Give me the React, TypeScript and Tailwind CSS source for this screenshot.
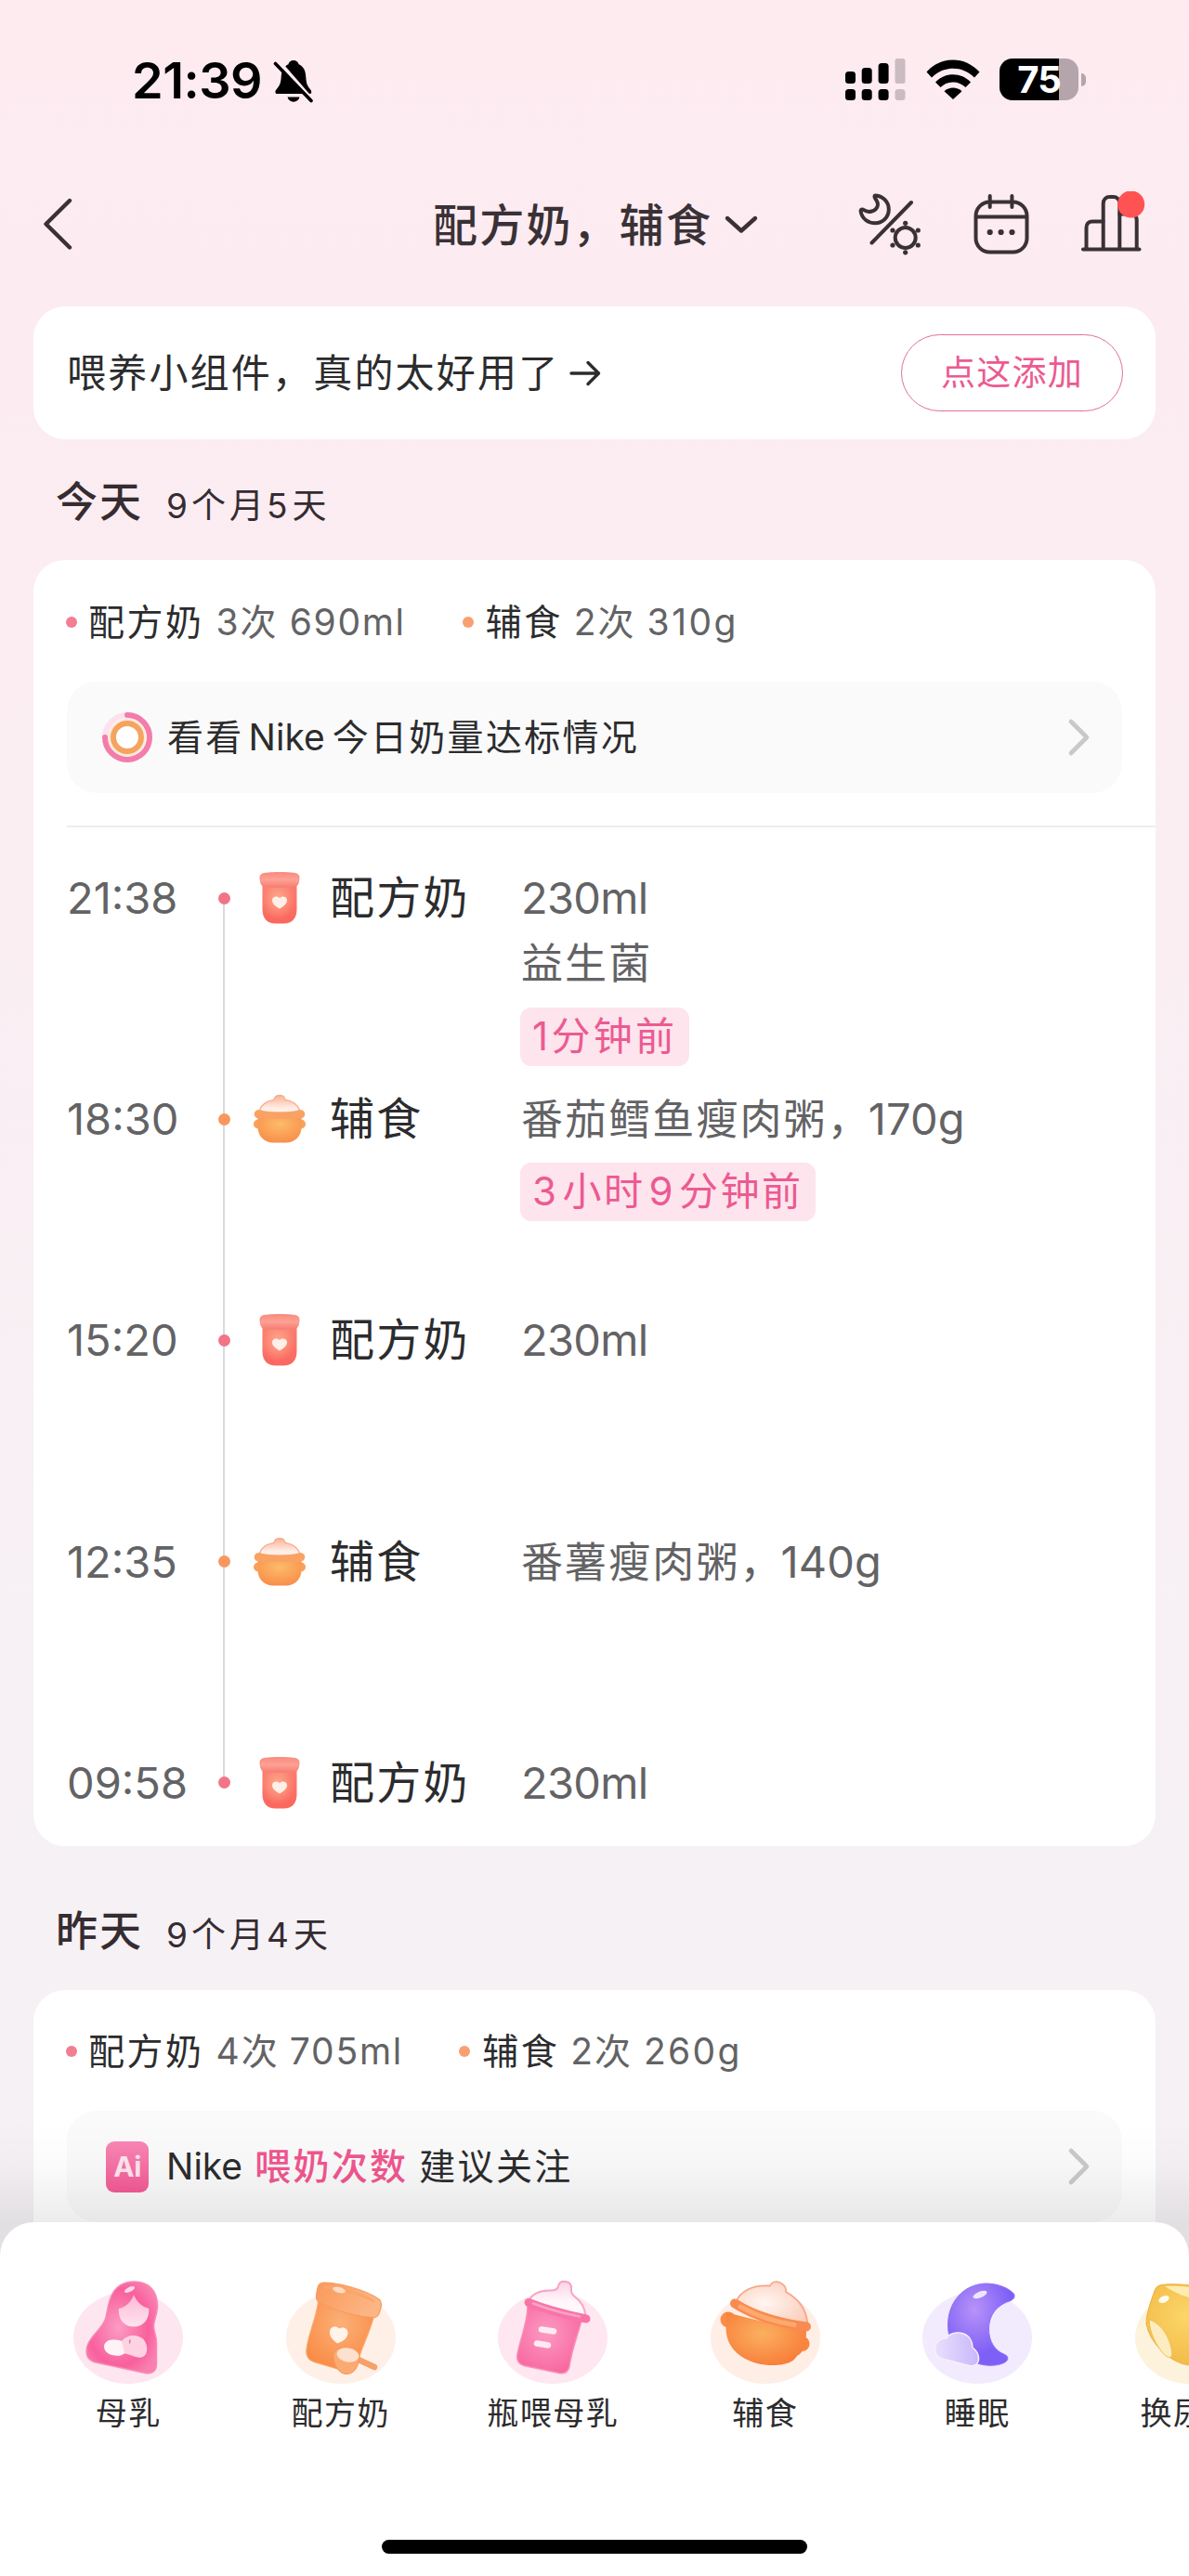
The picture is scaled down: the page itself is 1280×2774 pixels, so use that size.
import React from "react";

const FONT = "font-[Inter,'Noto_Sans_CJK_SC',sans-serif]";

function StatusBar() {
  return (
    <div className="flex h-[174px] items-start pl-[142px] pr-[111px] pt-[54px] text-black">
      <span className="w-[150px] whitespace-nowrap text-[54px] font-semibold leading-[66px] tracking-[-0.500px]">21:39</span>
      <svg className="ml-[2px] mt-[10px] h-[48px] w-[44px]" viewBox="0 0 44 48">
        <path
          fill="#000"
          d="M22 1c3 0 5 1.800 5.600 4.300C33.500 8 35 13 35.300 19c.4 7.500 2 10 4.700 13.200 1.700 2 2 4.800-.8 4.800H4.500c-2.600 0-2.600-2.800-.9-4.800C6.500 29 8.300 26 8.700 19 9 13 11 8 16.400 5.300 17 2.800 19 1 22 1zM15.500 40.500h13c-.8 3.200-3.400 5.200-6.500 5.200s-5.700-2-6.500-5.200z"
        />
        <path d="M5 1l40 46" stroke="#fcecf1" strokeWidth="4" />
        <path d="M2.500 4.500l38.500 40" stroke="#000" strokeWidth="3.600" strokeLinecap="round" />
      </svg>
      <svg className="ml-auto mt-[7px] h-[50px] w-[70px]" viewBox="0 0 70 50">
        <rect x="2" y="16" width="11" height="13" rx="3.500" />
        <rect x="19.700" y="12" width="11" height="17" rx="3.500" />
        <rect x="37.600" y="7" width="11" height="22" rx="3.500" />
        <rect x="55.500" y="2" width="11" height="27" rx="2.500" fill="#cbbcc2" />
        <rect x="2" y="35" width="11" height="12" rx="3.500" />
        <rect x="19.700" y="35" width="11" height="12" rx="3.500" />
        <rect x="37.600" y="35" width="11" height="12" rx="3.500" />
        <rect x="55.500" y="35" width="11" height="12" rx="3.500" fill="#cbbcc2" />
      </svg>
      <svg className="ml-[18px] mt-[9px] h-[46px] w-[60px]" viewBox="0 0 60 46">
        <path d="M1.500 14.500C17-3 43-3 58.500 14.500L53 20.500C40 7.500 20 7.500 7 20.500z" />
        <path d="M11 25.500C21 14.500 39 14.500 49 25.500L43.500 31C36 23.500 24 23.500 16.500 31z" />
        <path d="M20.500 35.300c5.500-5 13.500-5 19 0L30 44z" />
      </svg>
      <div className="ml-[20px] mt-[9px] flex items-center">
        <div className="flex h-[45px] w-[85px] items-center justify-center rounded-[14px] bg-[linear-gradient(90deg,#000_0_64px,#b3a5ab_64px)]">
          <span className="text-[40px] font-bold leading-[45px] tracking-[-1px] text-white">75</span>
        </div>
        <div className="ml-[3px] h-[14px] w-[5px] rounded-r-full bg-[#b3a5ab]" />
      </div>
    </div>
  );
}

function MoonSunIcon() {
  return (
    <svg className="h-[70px] w-[72px]" viewBox="0 0 72 70" fill="none" stroke="#3a3136" strokeWidth="4" strokeLinecap="round" strokeLinejoin="round">
      <path d="M20.500 4.500c8 .5 14.300 7 14.300 15S28.500 34.300 20.300 34.300c-7.800 0-14.300-4.800-15.600-12.300-.4-2.600 1.600-3.200 3.300-1.800 5 3.500 12.800 1.500 14.700-4.300 1-3.300-.4-5.400-2.300-7.900-1.300-1.800-1.200-3.500.1-3.500z" />
      <path d="M59 12L16.500 55.500" />
      <circle cx="52.700" cy="50" r="11" />
      <g fill="#3a3136" stroke="none">
        <circle cx="52.700" cy="34.300" r="2.600" />
        <circle cx="52.700" cy="65.800" r="2.600" />
        <circle cx="39" cy="42" r="2.600" />
        <circle cx="66.300" cy="42" r="2.600" />
        <circle cx="39" cy="58" r="2.600" />
        <circle cx="66.300" cy="58" r="2.600" />
      </g>
    </svg>
  );
}

function CalendarIcon() {
  return (
    <svg className="h-[70px] w-[66px]" viewBox="0 0 66 70" fill="none" stroke="#3a3136" strokeWidth="4" strokeLinecap="round">
      <rect x="5.500" y="11.500" width="55" height="54" rx="15" />
      <path d="M6 27.500h54M20.700 5v12M44.400 5v12" />
      <g fill="#3a3136" stroke="none">
        <circle cx="20.700" cy="44" r="3.100" />
        <circle cx="32.600" cy="44" r="3.100" />
        <circle cx="44.500" cy="44" r="3.100" />
      </g>
    </svg>
  );
}

function ChartIcon() {
  return (
    <svg className="h-[70px] w-[72px]" viewBox="0 0 72 70" fill="none" stroke="#3a3136" strokeWidth="4" strokeLinecap="round">
      <path d="M4 62.500h60.500" />
      <path d="M7.500 62V39c0-4 2.500-6.500 6.500-6.500h11.500" />
      <path d="M25.700 62V13.500c0-5 3-7.500 7-7.500h3.600c4 0 7 2.500 7 7.500V62" />
      <path d="M43.300 24.500h11.400c4 0 7 2.500 7 6.500v31" />
      <circle cx="55.600" cy="14" r="14.600" fill="#ff5353" stroke="none" />
    </svg>
  );
}

function NavBar() {
  return (
    <div className="grid h-[156px] grid-cols-[466px_1fr_366px] items-start">
      <svg className="ml-[43px] mt-[37px] h-[60px] w-[38px]" viewBox="0 0 38 60" fill="none" stroke="#3a3136" strokeWidth="4.400" strokeLinecap="round" strokeLinejoin="round">
        <path d="M32 5L6.500 30.200 32 55.500" />
      </svg>
      <div className="flex items-center pt-[34px]">
        <span className="whitespace-nowrap text-[48px] font-medium leading-[70px] tracking-[2.200px] text-[#3a3136]">配方奶，辅食</span>
        <svg className="ml-[12px] mt-[-3px] h-[24px] w-[38px] shrink-0" viewBox="0 0 38 24" fill="none" stroke="#3a3136" strokeWidth="4.400" strokeLinecap="round" strokeLinejoin="round">
          <path d="M4 5l15 13.500L34 5" />
        </svg>
      </div>
      <div className="flex pl-[8px] pt-[32px]">
        <MoonSunIcon />
        <div className="ml-[51px]"><CalendarIcon /></div>
        <div className="ml-[51px]"><ChartIcon /></div>
      </div>
    </div>
  );
}

function Banner() {
  return (
    <div className="mx-[36px] flex h-[143px] items-center justify-between rounded-[34px] bg-white pl-[36px] pr-[35px]">
      <div className="flex items-center">
        <span className="whitespace-nowrap text-[42px] leading-[60px] tracking-[2.200px] text-[#2c2c2e]">喂养小组件，真的太好用了</span>
        <svg className="ml-[10px] h-[32px] w-[36px]" viewBox="0 0 36 32" fill="none" stroke="#2c2c2e" strokeWidth="3.400" strokeLinecap="round" strokeLinejoin="round">
          <path d="M3 16h29M21 4.500L32.500 16 21 27.500" />
        </svg>
      </div>
      <div className="flex h-[83px] w-[239px] items-center justify-center rounded-full border-[1.500px] border-[#e0709c] text-[37px] leading-[60px] tracking-[1.300px] text-[#ec5a91]">
        点这添加
      </div>
    </div>
  );
}

function DayHeading({ day, age }: { day: string; age: React.ReactNode }) {
  return (
    <div className="flex items-center pl-[60px] text-[#352c31]">
      <span className="text-[45px] font-medium leading-[64px] tracking-[2px]">{day}</span>
      <span className="ml-[25px] mt-[9px] whitespace-nowrap text-[37px] leading-[56px]">{age}</span>
    </div>
  );
}

function Summary({ milk, food, gap }: { milk: React.ReactNode; food: React.ReactNode; gap: string }) {
  return (
    <div className="flex h-[60px] items-center pl-[35px] text-[39px] leading-[60px] text-[#636365]">
      <span className="h-[12px] w-[12px] rounded-full bg-[#f27e92]" />
      <span className="ml-[12px] whitespace-nowrap tracking-[2.500px] text-[#2c2c2e]">配方奶</span>
      <span className="ml-[13px] whitespace-nowrap">{milk}</span>
      <span className={"h-[12px] w-[12px] rounded-full bg-[#f8a071] " + gap} />
      <span className="ml-[13px] whitespace-nowrap tracking-[2.500px] text-[#2c2c2e]">辅食</span>
      <span className="ml-[12px] whitespace-nowrap">{food}</span>
    </div>
  );
}

function ChevronRight() {
  return (
    <svg className="ml-auto h-[44px] w-[26px]" viewBox="0 0 26 44" fill="none" stroke="#c9c9c9" strokeWidth="4.600" strokeLinecap="round" strokeLinejoin="round">
      <path d="M4 5l17 17L4 39" />
    </svg>
  );
}

function RingIcon() {
  return (
    <svg className="h-[56px] w-[56px]" viewBox="0 0 56 56" fill="none">
      <circle cx="28" cy="28" r="24" stroke="#fde2ee" strokeWidth="6" />
      <path d="M28 4a24 24 0 1 1-24 24" stroke="#f47caa" strokeWidth="6" strokeLinecap="round" />
      <circle cx="28" cy="28" r="19" stroke="#fdebdc" strokeWidth="3" />
      <circle cx="28" cy="28" r="15" stroke="#f5a35f" strokeWidth="6" fill="#fff" />
    </svg>
  );
}

function AiIcon() {
  return (
    <div className="flex h-[55px] w-[46px] items-center justify-center rounded-[9px] bg-[linear-gradient(#f886b4,#f35a94)] text-[30px] font-bold leading-[55px] tracking-[-0.500px] text-[#ffe3ef]">
      Ai
    </div>
  );
}

function JarIcon() {
  return (
    <svg className="h-[56px] w-[44px]" viewBox="0 0 44 56">
      <defs>
        <linearGradient id="jarBody" x1="0" y1="0" x2="0" y2="1">
          <stop offset="0" stopColor="#fb7d70" />
          <stop offset="1" stopColor="#fa675e" />
        </linearGradient>
        <radialGradient id="jarGlow" cx=".45" cy=".4" r=".5">
          <stop offset="0" stopColor="#ffb08f" stopOpacity=".9" />
          <stop offset="1" stopColor="#ffb08f" stopOpacity="0" />
        </radialGradient>
        <linearGradient id="jarLid" x1="0" y1="0" x2="0" y2="1">
          <stop offset="0" stopColor="#fb8a7d" />
          <stop offset=".5" stopColor="#fca295" />
          <stop offset="1" stopColor="#f97a70" />
        </linearGradient>
      </defs>
      <path d="M3.500 12h37v28c0 10-5 15.500-14 15.500h-9c-9 0-14-5.500-14-15.500z" fill="url(#jarBody)" />
      <path d="M3.500 12h37v28c0 10-5 15.500-14 15.500h-9c-9 0-14-5.500-14-15.500z" fill="url(#jarGlow)" />
      <path d="M7 1.200c9-1 21-1 30 0 4.500.5 6 2 6 4.800s-.8 7-2 8.300c-1 1.200-3 1.500-6 1.800-8 .7-18 .7-26 0-3-.3-5-.6-6-1.800C1.800 13 1 8.800 1 6s1.500-4.300 6-4.800z" fill="url(#jarLid)" stroke="#f4837a" strokeWidth=".8" />
      <path d="M22 39.500c-5-3-8-5.500-8-9 0-4 5-5.500 8-2.500 3-3 8-1.500 8 2.500 0 3.500-3 6-8 9z" fill="#ffefe9" />
    </svg>
  );
}

function PotIcon() {
  return (
    <svg className="h-[52px] w-[56px]" viewBox="0 0 56 52">
      <defs>
        <radialGradient id="potBody" cx=".5" cy=".3" r=".7">
          <stop offset="0" stopColor="#fdbb6a" />
          <stop offset="1" stopColor="#f88f4a" />
        </radialGradient>
        <linearGradient id="potDome" x1="0" y1="0" x2="0" y2="1">
          <stop offset="0" stopColor="#fab193" />
          <stop offset=".75" stopColor="#ffeee7" />
        </linearGradient>
      </defs>
      <circle cx="5" cy="31.500" r="5" fill="#f9a15a" />
      <circle cx="51" cy="31.500" r="5" fill="#f9a15a" />
      <path d="M6 19C7 12 13 6.500 22 5.300 22.500 2 25 .5 28 .5s5.500 1.500 6 4.800C43 6.500 49 12 50 19z" fill="url(#potDome)" stroke="#f7a98a" strokeWidth="1.200" />
      <path d="M4.500 23h47v12c0 9-7 16.500-17 16.500h-13C11.500 51.500 4.500 44 4.500 35z" fill="url(#potBody)" />
      <path d="M6 16c12 3.500 32 3.500 44 0 4 0 6 3 5 6.500C54 25 52 25.500 49 25.300c-14 1-28 1-42 0-3 .2-5-.3-6-2.800C0 19 2 16 6 16z" fill="#f9a263" />
    </svg>
  );
}

function Disc({ fill }: { fill: string }) {
  return <ellipse cx="65" cy="65.500" rx="59" ry="49.500" fill={fill} />;
}

function MotherIcon() {
  return (
    <svg className="h-[120px] w-[130px]" viewBox="0 0 130 120">
      <defs>
        <radialGradient id="mom" cx=".45" cy=".5" r=".6">
          <stop offset="0" stopColor="#fb9cc3" />
          <stop offset=".7" stopColor="#f8609d" />
          <stop offset="1" stopColor="#f97fb0" />
        </radialGradient>
        <linearGradient id="momFace" x1="0" y1="0" x2="0" y2="1">
          <stop offset="0" stopColor="#fdb9d4" />
          <stop offset="1" stopColor="#fee3ee" />
        </linearGradient>
      </defs>
      <Disc fill="#fee6f0" />
      <path d="M71 5c15-.5 25 9 25.500 25 .3 9-4 17-4 23 0 6 3 9 3 18v23c0 7-5 11-12 9.500L30 92c-8-2-11-8-9.500-16 2-12 17-20 20-31 2.500-8 2-16 7-26C52 10 60 5.200 71 5z" fill="url(#mom)" stroke="#f88bb6" strokeWidth="1.500" />
      <path d="M71 19c3 8 9 13 16.300 15C88 46 81 53.500 71 53.500S54 46 54.800 34C61 33 68 28 71 19z" fill="url(#momFace)" />
      <ellipse cx="66.500" cy="13.500" rx="6" ry="2.600" transform="rotate(-25 66.500 13.500)" fill="#fff" opacity=".75" />
      <path d="M58 69c5-6 12-7 18-5 7 2 10 9 9 16-1 6-6 8-12 6-5-1.500-8-3.500-14-3.500z" fill="#fdd3e3" />
      <path d="M39 75c0-4.500 5-8 10-7.500 4-.4 7 .5 9 1.500l3 13c-3 3-7 3.500-10 2.500-6 0-12-4-12-9.500z" fill="#fff3f8" />
      <path d="M67 67.500l-.5 4" stroke="#c96a93" strokeWidth="1.200" />
    </svg>
  );
}

function FormulaIcon() {
  return (
    <svg className="h-[120px] w-[130px]" viewBox="0 0 130 120">
      <defs>
        <radialGradient id="fmBody" cx=".5" cy=".35" r=".65">
          <stop offset="0" stopColor="#fcb077" />
          <stop offset="1" stopColor="#f98b46" />
        </radialGradient>
        <linearGradient id="fmLid" x1="0" y1="0" x2="1" y2=".4">
          <stop offset="0" stopColor="#fa995a" />
          <stop offset="1" stopColor="#fcb684" />
        </linearGradient>
      </defs>
      <Disc fill="#fef0e7" />
      <path d="M41 22C40 42 30 60 28 78c-.8 7 2 11.500 8 13.500l32 9.500c8 2 12.500-.5 14.500-8C87 76 97 58 101 40z" fill="url(#fmBody)" stroke="#fba669" strokeWidth="1.200" />
      <path d="M46 6c18 0 44 8 57 16 5 2.500 6.500 6 5 11-1.500 6-3 11-7.500 10.500C81 43 59 36 43 28c-4-2-5-4-4.500-8C39.500 12 40 6.500 46 6z" fill="url(#fmLid)" stroke="#f59d62" strokeWidth="1.200" />
      <path d="M47 11c18 1 39 7 53 15" fill="none" stroke="#f9a66d" strokeWidth="3" strokeLinecap="round" />
      <ellipse cx="63" cy="14" rx="7" ry="3" transform="rotate(14 63 14)" fill="#fff" opacity=".6" />
      <path d="M61 71.500c-6-4.500-8.500-8.500-8-13 .6-5 6.500-6.500 10-3 4-2.500 10-.5 9.500 5-.5 5-4 8.500-11.500 11z" fill="#fff3ea" />
      <path d="M85 89.500l16 7.500" stroke="#f6a06a" strokeWidth="6.500" strokeLinecap="round" />
      <path d="M57 84c0-5 6-8 13-8s16 4 15 10c-1 10-5 18.500-14 18.500-8 0-14-9-14-20.500z" fill="#fbaa73" stroke="#f79757" strokeWidth="1" />
      <ellipse cx="72.500" cy="84" rx="12" ry="7.500" transform="rotate(10 72.500 84)" fill="#fee0ce" />
    </svg>
  );
}

function BottleIcon() {
  return (
    <svg className="h-[120px] w-[130px]" viewBox="0 0 130 120">
      <defs>
        <radialGradient id="btBody" cx=".45" cy=".4" r=".7">
          <stop offset="0" stopColor="#fb9ac2" />
          <stop offset="1" stopColor="#f8619c" />
        </radialGradient>
        <linearGradient id="btDome" x1="0" y1="0" x2="0" y2="1">
          <stop offset="0" stopColor="#fdd3e4" />
          <stop offset=".6" stopColor="#fff7fa" />
        </linearGradient>
      </defs>
      <Disc fill="#fee7f0" />
      <path d="M39 27c3-9 13-13 24-12.500 5 0 7.500-2 8-4.500 1-4 4-5.800 8-5 4.500.8 6.500 4 6 8-.6 4 1 6 4 8.500 8 6 11 12 11 20C80 40 60 35 39 27z" fill="url(#btDome)" stroke="#f8a3c6" strokeWidth="2" />
      <path d="M38 31C38 50 30 66 27 83c-1.300 7 1 10.500 7 12.500l38 8c6 1 9.500-1 11-7C85 80 92 62 97 44z" fill="url(#btBody)" stroke="#fa8fba" strokeWidth="1.500" />
      <path d="M39 27.500c20 8 40 13 62 17.500" fill="none" stroke="#f874a8" strokeWidth="9" strokeLinecap="round" />
      <path d="M44 28.500c17 6.500 34 11 50 14" fill="none" stroke="#fba3c7" strokeWidth="2.500" strokeLinecap="round" />
      <path d="M53 56.500l13 2M48 71.500l12 2" stroke="#feeaf2" strokeWidth="6.500" strokeLinecap="round" />
    </svg>
  );
}

function FoodIcon() {
  return (
    <svg className="h-[120px] w-[130px]" viewBox="0 0 130 120">
      <defs>
        <radialGradient id="fdBody" cx=".45" cy=".4" r=".6">
          <stop offset="0" stopColor="#fbb060" />
          <stop offset="1" stopColor="#f8803b" />
        </radialGradient>
        <radialGradient id="fdDome" cx=".4" cy=".5" r=".7">
          <stop offset="0" stopColor="#fff6f1" />
          <stop offset="1" stopColor="#fbcbb9" />
        </radialGradient>
      </defs>
      <Disc fill="#feeee6" />
      <circle cx="25" cy="46" r="8.500" fill="#f88e4a" />
      <circle cx="104.500" cy="72" r="8" fill="#f88543" />
      <path d="M33 27c5-11 17-19 37-17.500 1.500-4 6-5.500 10.500-3.500s7 6 6.500 10c14 8 22 18 23.500 35C79 48 53 41 33 27z" fill="url(#fdDome)" stroke="#f7a68a" strokeWidth="1.800" />
      <path d="M23 38c0 8-1 16 0 23 3 22 27 35 52 34 12-.5 20-3 24-10 8-4 10-14 10-29C79 52 53 46 23 38z" fill="url(#fdBody)" />
      <path d="M32 28.500c22 14 47 21 77 25" fill="none" stroke="#f88a52" strokeWidth="10" strokeLinecap="round" />
      <path d="M38 32c20 11 40 17 58 19.500" fill="none" stroke="#fbaa6c" strokeWidth="5" strokeLinecap="round" />
    </svg>
  );
}

function SleepIcon() {
  return (
    <svg className="h-[120px] w-[130px]" viewBox="0 0 130 120">
      <defs>
        <radialGradient id="slMoon" cx=".4" cy=".32" r=".55">
          <stop offset="0" stopColor="#b793f8" />
          <stop offset="1" stopColor="#7f60f6" />
        </radialGradient>
        <linearGradient id="slCloud" x1="0" y1="0" x2="1" y2="0">
          <stop offset="0" stopColor="#eadffd" />
          <stop offset="1" stopColor="#c9b7fa" />
        </linearGradient>
      </defs>
      <Disc fill="#f2ebfe" />
      <path d="M74 7c10 0 22 3 29.500 10 3 3 1.500 7-2.500 8.500C86 30 77.500 41 77.500 56c0 13 6 23 17 27.500 4 1.500 4.500 5.500 1 8C88 96 76 96.500 65 93 46 87 33.500 72 33.500 52 33.500 27 50 8 74 7z" fill="url(#slMoon)" stroke="#8d74f6" strokeWidth="1" />
      <ellipse cx="68" cy="19" rx="8" ry="3.300" transform="rotate(-22 68 19)" fill="#fff" opacity=".8" />
      <path d="M32 66c2-5 11-7.500 18-5 7 2.500 10 9 10 15 4 3 7 8 6.500 13-.6 6-6 8-12 6L31 89c-7-1-12-5-11.500-12C20 70 26 65.500 32 66z" fill="url(#slCloud)" stroke="#f5effe" strokeWidth="1.500" />
    </svg>
  );
}

function DiaperIcon() {
  return (
    <svg className="h-[120px] w-[130px]" viewBox="0 0 130 120">
      <defs>
        <radialGradient id="dpBody" cx=".45" cy=".4" r=".6">
          <stop offset="0" stopColor="#fbd668" />
          <stop offset="1" stopColor="#f3bb48" />
        </radialGradient>
      </defs>
      <Disc fill="#fdf3dd" />
      <path d="M38 8c20-1 50 2 70 14 5 4 4 20 0 34-6 22-20 39-44 39C44 92 22 72 18 50c0-12 6-26 9-35 2-5 5-7 11-7z" fill="url(#dpBody)" stroke="#eeb441" strokeWidth="1.200" />
      <path d="M38 10c18-1 50 2 68 13-18 4-45 3-68-13z" fill="#fdebb0" />
      <path d="M21 46c11 3 23 16 25 38-2 5-7 2-11-3-7-9-13-20-14-35z" fill="#fcecc0" stroke="#f0bd53" strokeWidth="1" />
      <ellipse cx="37" cy="24" rx="6" ry="3.500" transform="rotate(-25 37 24)" fill="#fff" opacity=".9" />
    </svg>
  );
}

type Entry = { time: string; kind: "milk" | "food"; value: string; extra?: string; ago?: React.ReactNode };

const entries: Entry[] = [
  { time: "21:38", kind: "milk", value: "230ml", extra: "益生菌", ago: <span className="tracking-[3.300px]">1分钟前</span> },
  { time: "18:30", kind: "food", value: "番茄鳕鱼瘦肉粥，170g", ago: <>3<span className="ml-[4px]">小时</span><span className="mx-[4px]">9</span>分钟前</> },
  { time: "15:20", kind: "milk", value: "230ml" },
  { time: "12:35", kind: "food", value: "番薯瘦肉粥，140g" },
  { time: "09:58", kind: "milk", value: "230ml" },
];

function Mixed({ text }: { text: string }) {
  const m = text.match(/^([^\x00-\x7f]*)([\x00-\x7f]*)$/);
  const lead = m ? m[1] : "";
  const rest = m ? m[2] : text;
  return (
    <>
      {lead && <span className="text-[45px] tracking-[2.100px]">{lead}</span>}
      {rest && <span className={lead ? "ml-[-3px] text-[47px] tracking-[0.100px]" : "text-[47px] tracking-[-0.700px]"}>{rest}</span>}
    </>
  );
}

function TimelineRow({ e }: { e: Entry }) {
  return (
    <div className="grid h-[238.200px] grid-cols-[163px_74px_82px_204px_1fr] items-start">
      <span className="pl-[36px] text-[47px] leading-[66px] tracking-[0px] text-[#636365]">{e.time}</span>
      <div className="flex h-[66px] items-center pl-[36px]">
        <span className={"z-10 h-[13px] w-[13px] rounded-full " + (e.kind === "milk" ? "bg-[#f27488]" : "bg-[#f8975f]")} />
      </div>
      <div className="flex h-[66px] w-[56px] items-center justify-center">{e.kind === "milk" ? <JarIcon /> : <PotIcon />}</div>
      <span className="whitespace-nowrap text-[48px] leading-[66px] tracking-[2.200px] text-[#2c2c2e]">{e.kind === "milk" ? "配方奶" : "辅食"}</span>
      <div className="flex flex-col items-start pl-[1px] text-[#636365]">
        <div className="ml-[1px] h-[66px] whitespace-nowrap leading-[66px]"><Mixed text={e.value} /></div>
        {e.extra && <div className="ml-[1px] mt-[5px] h-[66px] whitespace-nowrap leading-[66px]"><Mixed text={e.extra} /></div>}
        {e.ago && (
          <div className="mt-[14px] h-[63px] whitespace-nowrap rounded-[12px] bg-[#fde4ed] px-[13px] text-[42px] leading-[62px] tracking-[2.500px] text-[#ec5a91]">
            {e.ago}
          </div>
        )}
      </div>
    </div>
  );
}

const tabs = [
  { label: "母乳", icon: <MotherIcon /> },
  { label: "配方奶", icon: <FormulaIcon /> },
  { label: "瓶喂母乳", icon: <BottleIcon /> },
  { label: "辅食", icon: <FoodIcon /> },
  { label: "睡眠", icon: <SleepIcon /> },
  { label: "换尿布", icon: <DiaperIcon /> },
];

export default function App() {
  return (
    <div className={"relative h-[2774px] w-[1280px] overflow-hidden bg-[linear-gradient(#fdebf0_0,#fbedf2_700px,#f6f1f5_2000px,#f3f1f5_2774px)] " + FONT}>
      <StatusBar />
      <NavBar />
      <Banner />

      <div className="mt-[35px] h-[95px]">
        <DayHeading day="今天" age={<>9<span className="mx-[4px]">个</span><span className="mr-[3px]">月</span>5<span className="ml-[5px]">天</span></>} />
      </div>

      <div className="mx-[36px] h-[1385px] rounded-[34px] bg-white pt-[37px]">
        <Summary
          milk={<>3<span className="ml-[2px]">次</span><span className="ml-[14px] tracking-[1.700px]">690ml</span></>}
          food={<>2<span className="ml-[2px]">次</span><span className="ml-[14px] tracking-[2.500px]">310g</span></>}
          gap="ml-[61px]"
        />
        <div className="mx-[36px] mt-[34px] flex h-[120px] items-center rounded-[32px] bg-[#fafafa] pl-[37px] pr-[33px]">
          <RingIcon />
          <span className="ml-[15px] whitespace-nowrap text-[39px] leading-[60px] tracking-[2.300px] text-[#2c2c2e]">
            看看<span className="mx-[5px] tracking-[0px]">Nike</span><span className="ml-[3px]">今日奶量达标情况</span>
          </span>
          <ChevronRight />
        </div>
        <div className="ml-[36px] mt-[35px] h-[2px] bg-[#ededed]" />
        <div className="relative mt-[43px] h-[1054px]">
          <div className="absolute left-[204px] top-[33px] h-[953px] w-[2px] bg-[#dadada]" />
          {entries.map((e) => (
            <TimelineRow key={e.time} e={e} />
          ))}
        </div>
      </div>

      <div className="mt-[59px] h-[96px]">
        <DayHeading day="昨天" age={<>9<span className="mx-[4px]">个</span><span className="mr-[3px]">月</span>4<span className="ml-[5px]">天</span></>} />
      </div>

      <div className="mx-[36px] h-[500px] rounded-[34px] bg-white pt-[36px]">
        <Summary
          milk={<>4<span className="ml-[2px]">次</span><span className="ml-[13px] tracking-[1.800px]">705ml</span></>}
          food={<>2<span className="ml-[2px]">次</span><span className="ml-[14px] tracking-[2.300px]">260g</span></>}
          gap="ml-[60px]"
        />
        <div className="mx-[36px] mt-[34px] flex h-[120px] items-center rounded-[32px] bg-[#fafafa] pl-[42px] pr-[33px]">
          <AiIcon />
          <span className="ml-[19px] flex whitespace-nowrap text-[39px] leading-[60px] tracking-[2.300px] text-[#2c2c2e]">
            <span className="tracking-[0px]">Nike</span>
            <span className="ml-[13px] font-medium text-[#f0568f]">喂奶次数</span>
            <span className="ml-[12px]">建议关注</span>
          </span>
          <ChevronRight />
        </div>
      </div>

      <div className="absolute inset-x-0 bottom-0">
        <div className="h-[110px] bg-[linear-gradient(rgba(0,0,0,0)_0%,rgba(0,0,0,0.015)_45%,rgba(0,0,0,0.075)_100%)]" />
        <div className="bg-[linear-gradient(rgba(0,0,0,0.075),rgba(0,0,0,0.075))]">
          <div className="h-[381px] overflow-hidden rounded-t-[36px] bg-white pt-[59px]">
            <div className="ml-[24px] flex w-[1372px]">
              {tabs.map((t) => (
                <div key={t.label} className="flex w-[228.500px] shrink-0 flex-col items-center">
                  {t.icon}
                  <span className="mt-[2px] whitespace-nowrap text-[34px] leading-[50px] tracking-[1.500px] text-[#2c2c2e]">{t.label}</span>
                </div>
              ))}
            </div>
            <div className="mx-auto mt-[111px] h-[15px] w-[458px] rounded-full bg-black" />
          </div>
        </div>
      </div>
    </div>
  );
}
